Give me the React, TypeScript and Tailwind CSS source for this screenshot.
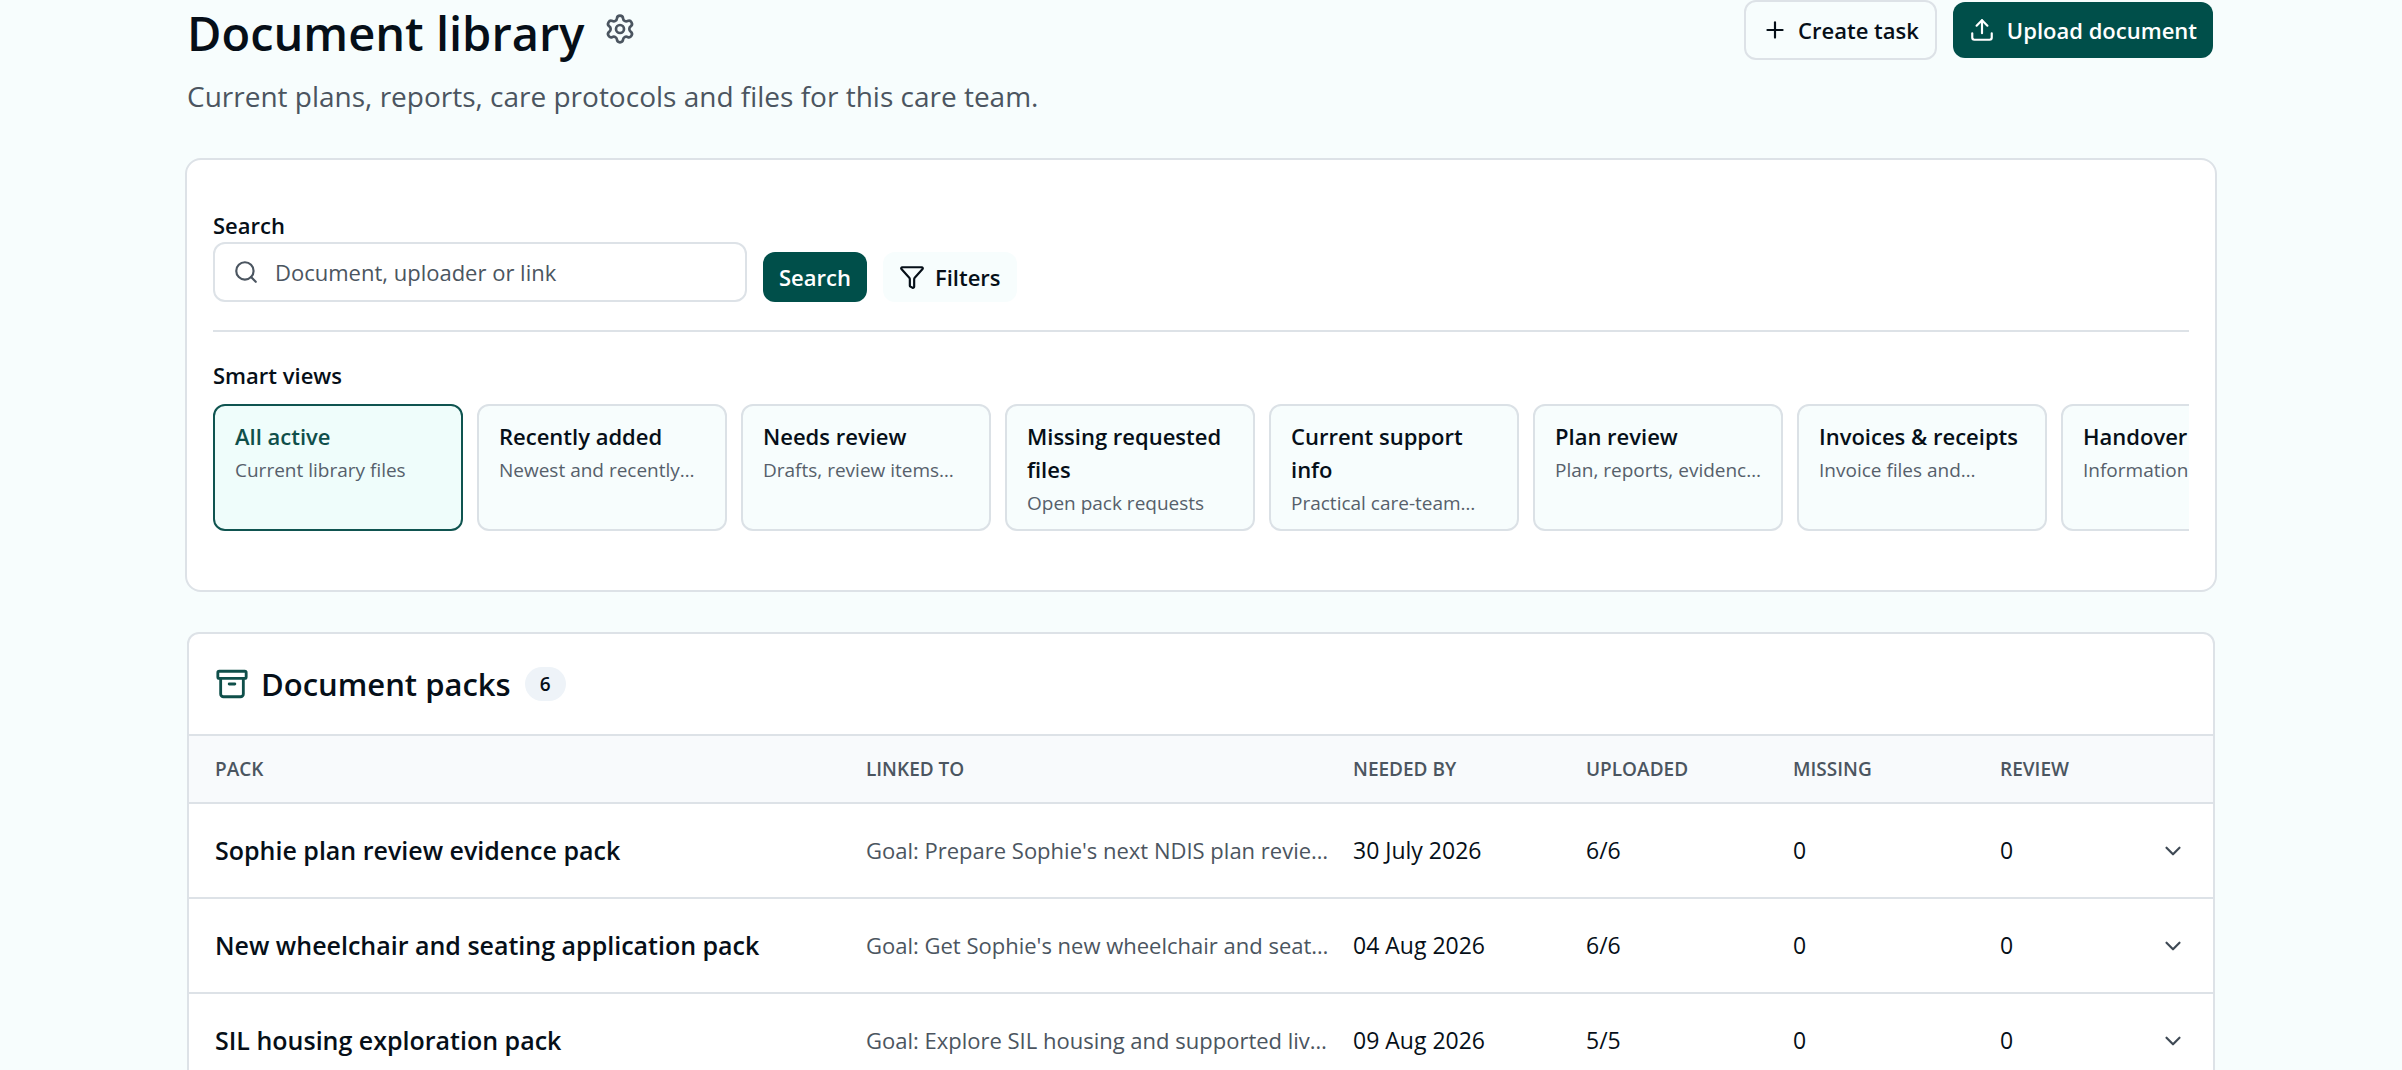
import { useState } from 'react';
import { Archive, ChevronDown, Funnel, Plus, Search, Settings, Upload } from 'lucide-react';

interface SmartView {
  title: string;
  hint: string;
}

interface Pack {
  name: string;
  linkedTo: string;
  neededBy: string;
  uploaded: string;
  missing: number;
  review: number;
}

const smartViews: SmartView[] = [
  { title: 'All active', hint: 'Current library files' },
  { title: 'Recently added', hint: 'Newest and recently…' },
  { title: 'Needs review', hint: 'Drafts, review items…' },
  { title: 'Missing requested files', hint: 'Open pack requests' },
  { title: 'Current support info', hint: 'Practical care-team…' },
  { title: 'Plan review', hint: 'Plan, reports, evidenc…' },
  { title: 'Invoices & receipts', hint: 'Invoice files and…' },
  { title: 'Handover', hint: 'Information' },
];

const packCount = 6;

const packs: Pack[] = [
  { name: 'Sophie plan review evidence pack', linkedTo: "Goal: Prepare Sophie's next NDIS plan revie…", neededBy: '30 July 2026', uploaded: '6/6', missing: 0, review: 0 },
  { name: 'New wheelchair and seating application pack', linkedTo: "Goal: Get Sophie's new wheelchair and seat…", neededBy: '04 Aug 2026', uploaded: '6/6', missing: 0, review: 0 },
  { name: 'SIL housing exploration pack', linkedTo: 'Goal: Explore SIL housing and supported liv…', neededBy: '09 Aug 2026', uploaded: '5/5', missing: 0, review: 0 },
];

function PageHeader() {
  return (
    <header className="flex items-start justify-between pr-1 pl-0.5">
      <div>
        <div className="flex h-[66px] items-center gap-5">
          <h1 className="text-[47px] leading-[66px] font-semibold">Document library</h1>
          <button aria-label="Library settings" className="mb-2 text-[#4b5560]">
            <Settings size={32} />
          </button>
        </div>
        <p className="mt-2 text-[28px] leading-[44px] text-[#4b5560]">
          Current plans, reports, care protocols and files for this care team.
        </p>
      </div>
      <div className="flex items-center gap-4">
        <button className="flex h-[60px] items-center gap-2.5 rounded-xl border-2 border-[#dde2e7] px-4 text-[22px] font-semibold">
          <Plus size={26} />
          Create task
        </button>
        <button className="flex h-[56px] items-center gap-3 rounded-xl bg-[#004f4a] px-4 text-[22px] font-semibold text-white">
          <Upload size={26} />
          Upload document
        </button>
      </div>
    </header>
  );
}

function SearchPanel() {
  const [query, setQuery] = useState('');
  const [activeView, setActiveView] = useState('All active');

  return (
    <section className="mt-10 rounded-2xl border-2 border-[#dde2e7] bg-white px-[26px] pt-12 pb-[59px]">
      <form className="flex items-end gap-4 border-b-2 border-[#dde2e7] pb-7" onSubmit={(e) => e.preventDefault()}>
        <div className="w-[534px]">
          <label htmlFor="search" className="block text-[22px] leading-[34px] font-semibold">
            Search
          </label>
          <div className="flex h-[60px] items-center gap-4 rounded-xl border-2 border-[#dde2e7] px-[18px]">
            <Search size={26} className="text-[#4b5560]" />
            <input
              id="search"
              value={query}
              onChange={(e) => setQuery(e.target.value)}
              placeholder="Document, uploader or link"
              className="min-w-0 flex-1 text-[22px] outline-none placeholder:text-[#4b5560]"
            />
          </div>
        </div>
        <button type="submit" className="h-[50px] rounded-xl bg-[#004f4a] px-4 text-[22px] font-semibold text-white">
          Search
        </button>
        <button type="button" className="flex h-[50px] items-center gap-2.5 rounded-xl bg-[#f7fdfd] px-4 text-[22px] font-semibold">
          <Funnel size={26} />
          Filters
        </button>
      </form>

      <h2 className="mt-[26px] text-[22px] leading-[34px] font-semibold">Smart views</h2>
      <div className="mt-3 flex gap-[14px] overflow-hidden">
        {smartViews.map((view) => (
          <button
            key={view.title}
            onClick={() => setActiveView(view.title)}
            className={
              view.title === activeView
                ? 'flex h-[127px] w-[250px] shrink-0 flex-col items-start rounded-xl border-2 border-[#0f5450] bg-[#effdfb] px-5 pt-[14px] text-left text-[#0f4f4a]'
                : 'flex h-[127px] w-[250px] shrink-0 flex-col items-start rounded-xl border-2 border-[#dbe1e6] bg-[#f7fdfd] px-5 pt-[14px] text-left'
            }
          >
            <span className="text-[22px] leading-[33px] font-semibold">{view.title}</span>
            <span className="text-[19px] leading-[34px] whitespace-nowrap text-[#56606b]">{view.hint}</span>
          </button>
        ))}
      </div>
    </section>
  );
}

function PackTable() {
  return (
    <section className="mx-0.5 mt-10 overflow-hidden rounded-xl border-2 border-[#dde2e7] bg-white">
      <div className="flex h-[100px] items-center px-[26px]">
        <Archive size={34} className="text-[#0f4f4a]" />
        <h2 className="ml-3 text-[31px] font-semibold">Document packs</h2>
        <span className="ml-3.5 rounded-full bg-[#eef3f8] px-[15px] text-[19px] leading-[34px] font-semibold">{packCount}</span>
      </div>
      <table className="w-full table-fixed text-left">
        <colgroup>
          <col />
          <col className="w-[487px]" />
          <col className="w-[233px]" />
          <col className="w-[207px]" />
          <col className="w-[207px]" />
          <col className="w-[144px]" />
          <col className="w-[69px]" />
        </colgroup>
        <thead>
          <tr className="h-[68px] border-y-2 border-[#dde2e7] bg-[#f8fafc] text-[19px] text-[#4b5560] uppercase">
            <th className="pl-[26px] font-semibold">Pack</th>
            <th className="font-semibold">Linked to</th>
            <th className="font-semibold">Needed by</th>
            <th className="font-semibold">Uploaded</th>
            <th className="font-semibold">Missing</th>
            <th className="font-semibold">Review</th>
            <th />
          </tr>
        </thead>
        <tbody>
          {packs.map((pack) => (
            <tr key={pack.name} className="h-[95px] border-b-2 border-[#dde2e7] text-[23px]">
              <td className="pl-[26px] text-[25px] font-semibold">{pack.name}</td>
              <td className="text-[22px] whitespace-nowrap text-[#4b5560]">{pack.linkedTo}</td>
              <td>{pack.neededBy}</td>
              <td>{pack.uploaded}</td>
              <td>{pack.missing}</td>
              <td>{pack.review}</td>
              <td>
                <button aria-label={`Expand ${pack.name}`} className="flex px-4 py-3 text-[#3f4a55]">
                  <ChevronDown size={26} />
                </button>
              </td>
            </tr>
          ))}
        </tbody>
      </table>
    </section>
  );
}

export default function App() {
  return (
    <div className="h-screen overflow-hidden bg-[#f7fdfd] px-[185px] font-['Open_Sans','Noto_Sans',sans-serif] text-[#060f18]">
      <PageHeader />
      <SearchPanel />
      <PackTable />
    </div>
  );
}
